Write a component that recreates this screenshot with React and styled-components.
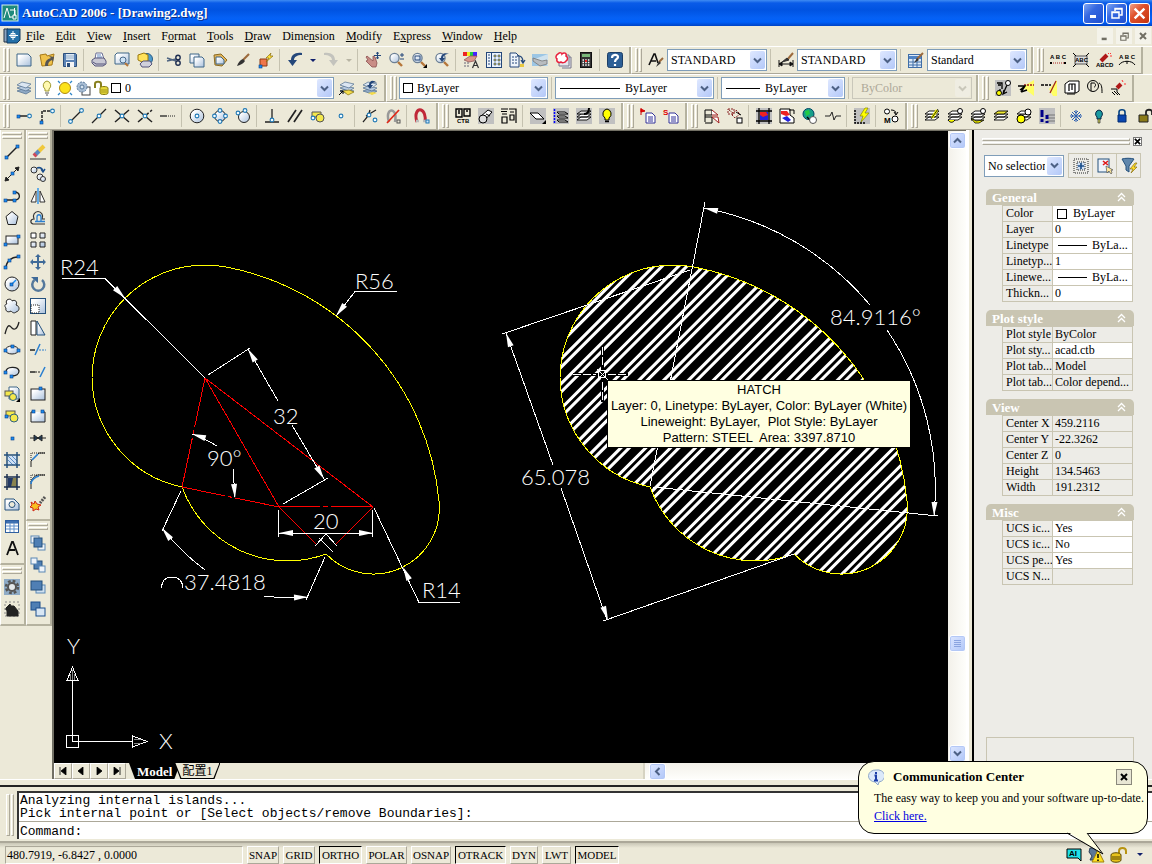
import { useState } from 'react'
import styled, { createGlobalStyle, css } from 'styled-components'

const GlobalStyle = createGlobalStyle`
  * {
    box-sizing: border-box;
  }

  body {
    margin: 0;
    background-color: #ece9d8;
    font-family: 'Liberation Serif', 'Noto Sans CJK TC', serif;
    font-size: 12px;
    line-height: 14px;
    color: #000;
  }

  button,
  select,
  input {
    font: inherit;
    color: inherit;
    padding: 0;
    margin: 0;
  }
`

/* ---------- icons ---------- */

const BLUE = '#1c4f8c'
const dot = (x, y) => (
  <rect x={x - 1} y={y - 1} width='3' height='3' fill='#1a8cf0' stroke='#0b3f86' strokeWidth='.6' />
)
const ring = (x, y) => (
  <circle cx={x} cy={y} r='1.9' fill='#f2fbff' stroke='#1f78b4' strokeWidth='1.1' />
)
const gray = <rect width='16' height='16' fill='#c0c0c0' stroke='none' />
const tinyText = (text, x, y, fill = '#000', size = 6) => (
  <text x={x} y={y} fill={fill} stroke='none' fontSize={size} fontWeight='700' fontFamily='Liberation Sans, sans-serif'>
    {text}
  </text>
)
const corner = <path d='M16 12v4h-4z' fill='#000' stroke='none' />
const lens = (
  <>
    <path d='M10 10l4 4' stroke='#b5763a' strokeWidth='2.4' />
    <circle cx='6.5' cy='6' r='4.6' fill='url(#sheen)' stroke='#6b7f95' strokeWidth='1.3' />
  </>
)
const sheets = (top) => (
  <>
    <path d='M1 11l5-2 9 2-5 3z' fill='#8fa9c4' stroke='#4f6d8e' strokeWidth='.7' />
    <path d='M1 8l5-2 9 2-5 3z' fill='#b8cbe0' stroke='#4f6d8e' strokeWidth='.7' />
    <path d='M1 5l5-3 9 2-5 4z' fill={top} stroke='#4f6d8e' strokeWidth='.7' />
  </>
)
const blackSheets = (fill) => (
  <>
    <path d='M1 12l4-3h10l-4 3zM1 9l4-3h10l-4 3z' fill='#fff' stroke='#000' strokeWidth='.9' />
    <path d='M1 6l4-3h10l-4 3z' fill={fill} stroke='#000' strokeWidth='.9' />
  </>
)
const squares = (a, b) => (
  <>
    <rect x='1' y='1' width='9' height='8' fill={a} stroke='#1c4f8c' />
    <rect x='6' y='7' width='9' height='8' fill={b} stroke='#1c4f8c' />
  </>
)

const ICONS = {
  new: <path d='M1 2h11l3 3v9H1z' fill='url(#sheen)' stroke='#3f6688' />,
  open: (
    <>
      <path d='M1 3l6-1 1 2 7-2-2 11-10 1z' fill='#f0c24a' stroke='#a87a18' />
      <path d='M6 14c0-5 2-7 6-8l-2-2 5 1-1 5-1-2c-3 1-4 3-4 6z' fill='#555' stroke='none' />
    </>
  ),
  save: (
    <>
      <path d='M1.500 1.500h12l1 1v12h-13z' fill='#5b83b5' stroke='#2c4f7c' />
      <path d='M4 2h8v6H4z' fill='#dce9f5' stroke='none' />
      <path d='M4 4h8M4 6h8' stroke='#7b98b8' strokeWidth='.7' />
      <path d='M4 10h8v5H4z' fill='#f5f5f5' stroke='none' />
      <path d='M5 11h3v4H5z' fill='#2c4f7c' stroke='none' />
    </>
  ),
  print: (
    <>
      <path d='M4 7l1-6h6l2 6z' fill='#fff' stroke='#6a6f96' />
      <path d='M6 3h4M6 5h5' stroke='#3a6ab0' strokeWidth='.8' />
      <path d='M1 8l3-2h9l2 3v3l-3 2H4l-3-3z' fill='#c8c8d4' stroke='#55557a' />
      <path d='M2 10l3 2h9' stroke='#55557a' />
    </>
  ),
  preview: (
    <>
      <path d='M3 1h12v11H1V3z' fill='url(#sheen)' stroke='#3f6688' />
      <path d='M11 11l3 3' stroke='#b5763a' strokeWidth='2' />
      <circle cx='9' cy='8' r='3' fill='#cfe4f6' stroke='#4a6a8a' />
    </>
  ),
  publish: (
    <>
      <circle cx='10' cy='7' r='5.500' fill='#4f9ccc' stroke='#2b5d86' />
      <path d='M1 3l6-2 4 2v6l-6 1-4-2z' fill='#ffe25a' stroke='#9a7810' />
      <path d='M3 12l3-3h7l2 3-3 3H5z' fill='#d0d0dc' stroke='#55557a' />
    </>
  ),
  cut: (
    <>
      <path d='M1 6l9 3M1 9l9-2' stroke='#4f6480' strokeWidth='1.500' />
      <circle cx='12' cy='5.500' r='2.200' stroke='#1d2d50' strokeWidth='1.400' />
      <circle cx='12' cy='11' r='2.200' stroke='#1d2d50' strokeWidth='1.400' />
    </>
  ),
  copy: (
    <>
      <path d='M1 2h9v9H1z' fill='url(#sheen)' stroke='#3f6688' />
      <path d='M5 5h8l2 2v8H5z' fill='url(#sheen)' stroke='#3f6688' />
    </>
  ),
  paste: (
    <>
      <path d='M2 3l7-1 6 6-5 6-7-1z' fill='#e2b458' stroke='#8c6a20' />
      <path d='M4 5h5l3 3v4H4z' fill='url(#sheen)' stroke='#3f6688' />
    </>
  ),
  brush: (
    <>
      <path d='M14 2L8 8' stroke='#9c6a3c' strokeWidth='2.200' />
      <path d='M8 7l2 2c-2 3-5 4-8 5 1-3 3-6 6-7z' fill='#333' stroke='none' />
    </>
  ),
  blockEdit: (
    <>
      <path d='M2 7h7v7H2z' fill='#f0764a' stroke='#8c3a18' />
      <path d='M13 1L8 6h3L8 10l7-6h-3z' fill='#ffe23c' stroke='#8c7010' strokeWidth='.7' />
      {dot(2, 14)}
    </>
  ),
  undo: <path d='M15 1C8 0 4 3 4 8H1l4.500 6L10 8H7c0-3 3-5 8-5z' fill='#24477a' stroke='none' />,
  redo: <path d='M1 1c7-1 11 2 11 7h3l-4.500 6L6 8h3c0-3-3-5-8-5z' fill='#c3c3bd' stroke='none' />,
  pan: (
    <>
      <path d='M2 4l6 5V4l2 1 2 6-1 4H7L1 9l2-1-2-3z' fill='#c98d86' stroke='#8b4f4f' strokeWidth='.8' />
      <path d='M12.500 0v7M9 3.500h7M11 1.500l1.500-1 1.500 1M11 5.500l1.500 1 1.500-1' stroke='#24477a' />
    </>
  ),
  zoom: (
    <>
      {lens}
      <path d='M12 3h4M14 1v4M12 7h4' stroke='#24477a' />
    </>
  ),
  zoomWin: (
    <>
      {lens}
      <rect x='4' y='4' width='5' height='4' stroke='#24477a' />
      {corner}
    </>
  ),
  zoomPrev: (
    <>
      {lens}
      <path d='M15 2C11 0 7 2 7 6H5l3 4 3-4H9c0-2 2-4 6-4z' fill='#24477a' stroke='none' />
    </>
  ),
  props: (
    <>
      <path d='M0 0h4v4H0z' fill='#e22' stroke='none' />
      <path d='M4 0h3v4H4z' fill='#ee2' stroke='none' />
      <path d='M7 0h3v4H7z' fill='#2c4' stroke='none' />
      <path d='M10 0h4v4h-4z' fill='#42f' stroke='none' />
      <path d='M1 8l6-4h7l-3 5-5 1z' fill='#d8978a' stroke='#8b4f4f' strokeWidth='.7' />
      <path d='M9.500 16l3-7 3 7M11 13.500h3' stroke='#333' strokeWidth='1.200' />
      <path d='M1 11h6M1 14h6' stroke='#667' strokeDasharray='2 1' />
    </>
  ),
  design: (
    <>
      <rect x='.500' y='.500' width='15' height='15' fill='#eef4fb' stroke='#24477a' />
      <path d='M5.500 1v14' stroke='#24477a' />
      <path d='M2 3h2M2 6h2M2 9h2M2 12h2' stroke='#24477a' />
      <path d='M8 3h2v2H8zM12 3h2v2h-2zM8 7h2v2H8zM12 7h2v2h-2zM8 11h2v2H8zM12 11h2v2h-2z' fill='#e8c840' stroke='#24477a' strokeWidth='.6' />
    </>
  ),
  toolPal: (
    <>
      <path d='M1 1h6l3 3v11H1z' fill='#eef4fb' stroke='#24477a' />
      <path d='M3 5h5M3 8h5M3 11h5' stroke='#24477a' strokeDasharray='2 1' />
      <path d='M8 4c4-1 6 2 6 6M12 8l2 3 2-3' stroke='#24477a' strokeWidth='1.300' />
      <rect x='11' y='12' width='4' height='3' fill='#e8c840' stroke='none' />
    </>
  ),
  sheetSet: (
    <>
      <path d='M0 2h16v12H0z' fill='#9cc6e4' stroke='none' />
      <path d='M0 8l16-6v12z' fill='#cfe2ee' stroke='none' />
      <path d='M1 6l9 3 5-1v4l-7 2-7-5z' fill='#b8bcc0' stroke='#777' strokeWidth='.8' />
    </>
  ),
  markup: (
    <>
      <path d='M4 3h10v11H4zM14 5h2v11H7' fill='#e6e6ee' stroke='#778' />
      <path d='M3 2c2-2 4-1 4 0 2-2 5-1 4 2 2 1 2 4 0 5-1 2-4 2-5 1-2 1-5 0-4-3-2-1-1-4 1-5z' fill='#fff' stroke='#e8203c' strokeWidth='1.500' />
    </>
  ),
  calc: (
    <>
      <rect x='2.500' y='.500' width='11' height='15' fill='#333' stroke='#111' />
      <rect x='4' y='2' width='8' height='3' fill='#7ab87a' stroke='none' />
      <path d='M4.500 8h7M4.500 10.500h7M4.500 13h7' stroke='#fff' strokeWidth='1.500' strokeDasharray='1.500 1.200' />
      <path d='M7 8h2v2H7z' fill='#e22' stroke='none' />
    </>
  ),
  help: (
    <>
      <rect x='.500' y='.500' width='15' height='15' rx='2' fill='#2c5f96' stroke='#1d3f66' />
      <path d='M5 6c0-4 6-4 6-1 0 2-3 2-3 5M8 12v2' stroke='#fff' strokeWidth='2.200' />
    </>
  ),
  textStyle: (
    <>
      <path d='M1 13L6 2h1l3 9M3 9h5' stroke='#111' strokeWidth='1.600' />
      <path d='M15 6l-4 4' stroke='#9c6a3c' strokeWidth='2' />
      <path d='M11 9l2 2-5 4z' fill='#333' stroke='none' />
    </>
  ),
  dimStyle: (
    <>
      <path d='M1 8v7M15 8v7M1 12h14M1 12l3-2v4zM15 12l-3-2v4z' fill='#111' stroke='#111' />
      <path d='M15 1L9 8' stroke='#9c6a3c' strokeWidth='2' />
      <path d='M9 6l2 2-7 2z' fill='#333' stroke='#333' />
    </>
  ),
  tableStyle: (
    <>
      <rect x='.500' y='2.500' width='13' height='13' fill='#dce9f8' stroke='#3f6ea8' />
      <path d='M1 4h12v3H1z' fill='#4f83c4' stroke='none' />
      <path d='M5 7v8M9 7v8M1 10h12M1 13h12' stroke='#3f6ea8' />
      <path d='M15 1l-6 6' stroke='#9c6a3c' strokeWidth='2' />
      <path d='M9 6l2 2-5 3z' fill='#333' stroke='none' />
    </>
  ),
  arcText: (
    <>
      {tinyText('A B C', 0, 7)}
      <path d='M1 11h14' stroke='#a22' strokeDasharray='1 1' />
      <path d='M0 10h2v2H0zM14 10h2v2h-2z' fill='#000' stroke='none' />
    </>
  ),
  textFit: (
    <>
      <rect x='2' y='4' width='12' height='8' fill='#ddd' stroke='#555' />
      <path d='M0 1l3 3M16 1l-3 3M0 15l3-3M16 15l-3-3' stroke='#000' />
      {tinyText('ABC', 2, 10, '#000', 6)}
    </>
  ),
  textMask: (
    <>
      <path d='M5 9l6-6' stroke='#b01818' strokeWidth='4' />
      <path d='M12 1l1 1M14 4h2M15 1l-1 1' stroke='#f33' />
      {tinyText('ABCD', 0, 15, '#000', 6)}
    </>
  ),
  textArc: (
    <>
      {tinyText('A B C', 0, 7)}
      <path d='M0 13c3-5 13-5 16 0M8 9v3' stroke='#000' />
    </>
  ),
  layers: sheets('#dbe6f2'),
  makeLayer: (
    <>
      {sheets('#dbe6f2')}
      <path d='M4 11l6-1 5 2-6 3z' fill='#f5dc4a' stroke='#8a7410' strokeWidth='.7' />
      <path d='M0 15l4-4M1 11h3v3' stroke='#000' />
    </>
  ),
  layerPrev: (
    <>
      {sheets('#dbe6f2')}
      <path d='M15 3c-4-4-8-2-8 2H5l3 4 3-4H9c0-2 3-3 6-2z' fill='#24477a' stroke='none' />
      <path d='M6 13l5-1 4 1-5 2z' fill='#f5dc4a' stroke='none' />
    </>
  ),
  bulbOn: (
    <>
      <path d='M8 1a4.500 4.500 0 0 1 2 8v2H6V9a4.500 4.500 0 0 1 2-8z' fill='#fff9b0' stroke='#a09a30' />
      <path d='M6 13h4M7 15h2' stroke='#555' />
    </>
  ),
  sun: (
    <>
      <circle cx='8' cy='8' r='5.500' fill='#fce21c' stroke='#b08a10' />
      <path d='M1 1l2 2M15 1l-2 2M1 15l2-2M15 15l-2-2' stroke='#2f86c8' strokeWidth='1.300' />
    </>
  ),
  freezeVp: (
    <>
      <rect x='7' y='7' width='8' height='8' fill='#fff' stroke='#444' />
      <circle cx='7' cy='7' r='5' fill='#a8bdd4' stroke='#5a7a9c' strokeDasharray='2 1' />
      <circle cx='7' cy='7' r='2' fill='#d8e4ef' stroke='#5a7a9c' />
    </>
  ),
  unlock: (
    <>
      <path d='M2 8V4c0-3 6-3 6 0v3' stroke='#888020' strokeWidth='2' />
      <path d='M7 8c0-2 8-2 8 0v5c0 2-8 2-8 0z' fill='#e6d93c' stroke='#857a10' />
      <path d='M8 10h6M8 12h6' stroke='#857a10' strokeWidth='.7' />
    </>
  ),
  trackPt: (
    <>
      <path d='M3 8h8' stroke='#222' strokeWidth='1.500' />
      {dot(2, 8)}
      {ring(13.500, 8)}
    </>
  ),
  from: (
    <>
      <path d='M3 14V3h9' stroke='#222' strokeWidth='1.500' strokeDasharray='3 1' />
      {dot(2, 14)}
      {ring(13.500, 3)}
    </>
  ),
  endpoint: (
    <>
      <path d='M3 13L13 3' stroke='#222' strokeWidth='1.300' />
      {ring(2.500, 13.500)}
      {ring(13.500, 2.500)}
    </>
  ),
  midpoint: (
    <>
      <path d='M1 15L15 1' stroke='#222' strokeWidth='1.300' />
      {ring(8, 8)}
    </>
  ),
  intersection: (
    <>
      <path d='M1 2l14 12M1 14L15 2' stroke='#222' strokeWidth='1.500' />
      {ring(8, 8)}
    </>
  ),
  appInt: (
    <>
      <path d='M1 14L15 2' stroke='#222' strokeWidth='1.500' strokeDasharray='6 2' />
      <path d='M1 2l14 12' stroke='#222' strokeWidth='1.500' />
      {ring(8, 8)}
    </>
  ),
  extension: (
    <>
      <path d='M0 8h7' stroke='#222' strokeWidth='1.300' />
      <path d='M8 8h8' stroke='#222' strokeDasharray='1 1' />
    </>
  ),
  center: (
    <>
      <circle cx='8' cy='8' r='6.800' fill='url(#sheen)' stroke='#222' />
      {ring(8, 8)}
    </>
  ),
  quadrant: (
    <>
      <circle cx='8' cy='8' r='5.500' fill='url(#sheen)' stroke='#222' />
      {ring(8, 2.500)}
      {ring(8, 13.500)}
      {ring(2.500, 8)}
      {ring(13.500, 8)}
    </>
  ),
  tangent: (
    <>
      <circle cx='9' cy='9' r='5.500' fill='url(#sheen)' stroke='#222' />
      {ring(3, 5)}
      {ring(10, 2.500)}
    </>
  ),
  perpendicular: (
    <>
      <path d='M8 1v12M1 14h14' stroke='#222' strokeWidth='1.300' />
      {ring(8, 12)}
    </>
  ),
  parallel: <path d='M1 14L9 2M7 14l8-12' stroke='#222' strokeWidth='1.700' />,
  insertPt: (
    <>
      <path d='M2 4h9v5H2z' fill='#f4e84c' stroke='#555' />
      <circle cx='10' cy='10' r='4' fill='#f4e84c' stroke='#555' />
      {ring(3, 10)}
    </>
  ),
  node: ring(8, 8),
  nearest: (
    <>
      <path d='M1 14C6 8 6 9 8 2M4 8l10-6' stroke='#222' strokeWidth='1.300' />
      {ring(13, 12)}
      {ring(7, 7)}
    </>
  ),
  snapNone: (
    <>
      <path d='M4 14c-3-9 1-13 4-11s3 6 2 11' stroke='#999' strokeWidth='2.500' />
      <path d='M2 15L14 2' stroke='#e02818' strokeWidth='1.700' />
      <rect x='12' y='12' width='3' height='3' stroke='#555' />
    </>
  ),
  snapSet: (
    <>
      <path d='M3 14C0 5 4 1 7 2s5 6 4 12' stroke='#c02838' strokeWidth='3' />
      <path d='M2 13h3M9 13h4' stroke='#bbb' strokeWidth='2.500' />
      <rect x='12' y='12' width='3' height='3' fill='#cfe6ff' stroke='#1f78b4' />
    </>
  ),
  ctb: (
    <>
      <path d='M1 1h6v8H1zM9 1h6v7H9zM3 3h2M11 3h2M3 5h2' stroke='#000' strokeWidth='1.400' />
      {tinyText('CTB', 2, 15, '#000', 6)}
    </>
  ),
  plotter: (
    <>
      {gray}
      <path d='M2 9l8-7 4 2-7 8z' fill='#fff' stroke='#000' />
      <circle cx='5' cy='11' r='4' fill='#ddd' stroke='#000' />
      <path d='M8 6l4 2' stroke='#000' />
    </>
  ),
  boxText: <path d='M0 1h7M0 3.500h6M1 6h5M1 9v6h5V9zM8 1h7v14M9 4h4M9 7h4v5H9z' stroke='#000' strokeWidth='1.200' />,
  layFlat: (
    <>
      {gray}
      <path d='M0 5h8l6 6H6z' fill='#fff' stroke='#000' />
      {corner}
    </>
  ),
  layTree: (
    <>
      {gray}
      <path d='M4 4h8l3 2H6zM4 8h8l3 2H6zM4 12h8l3 2H6z' fill='#eee' stroke='#000' />
      <path d='M1.500 1v14' stroke='#00f' strokeDasharray='2 1' strokeWidth='1.500' />
    </>
  ),
  layRestore: (
    <>
      {gray}
      {blackSheets('#ddd')}
      <path d='M8 6c5 0 5-4 5-6' stroke='#000' strokeWidth='2' />
    </>
  ),
  bulb: (
    <>
      {gray}
      <path d='M8 1a5 5 0 0 1 2 9v2H6v-2a5 5 0 0 1 2-9z' fill='#ff0' stroke='#000' />
      <path d='M6 13.500h4' stroke='#000' strokeWidth='1.500' />
    </>
  ),
  flagDoc: (
    <>
      <path d='M6 5h6l3 3v7H6z' fill='#fff' stroke='#339' />
      <path d='M8 9h5M8 11h5M8 13h5' stroke='#339' />
      <path d='M1 0v7M1 1l4 2-4 1z' fill='#f00' stroke='#c00' />
    </>
  ),
  scriptDoc: (
    <>
      <path d='M6 5h6l3 3v7H6z' fill='#fff' stroke='#339' />
      <path d='M8 9h5M8 11h5M8 13h5' stroke='#339' />
      {tinyText('S', 0, 7, '#d00', 8)}
    </>
  ),
  clipBlock: (
    <>
      <path d='M1 2v12M1 2h7v5H1M1 9h7v6H1' stroke='#000' />
      <path d='M8 2l6 5H8M8 9h6l1 6z' fill='#fff' stroke='#a02020' />
    </>
  ),
  copyNested: (
    <>
      <path d='M1 1h6v5H1zM2 2l4 3M5 7l4-5 4 4-5 4z' stroke='#822' strokeDasharray='2 1' />
      <path d='M9 4l5 3' stroke='#000' />
      <rect x='10' y='10' width='5' height='5' fill='#fff' stroke='#000' />
    </>
  ),
  imgFrame: (
    <>
      {gray}
      <path d='M4 4h8v8H4z' fill='#22d' stroke='none' />
      <path d='M4 4h6l2 3-5 2-3-2z' fill='#e22' stroke='none' />
      <path d='M3 0v16M13 0v16M0 3h16M0 13h16' stroke='#000' strokeWidth='1.300' />
    </>
  ),
  imgSwap: (
    <>
      <path d='M1 1h10v6l4 3v5H1z' fill='#fff' stroke='#000' />
      <path d='M2 3h6l3 4-4 1-5-2z' fill='#e22' stroke='none' />
      <path d='M3 10l5-2 4 4-3 2z' fill='#22d' stroke='none' />
      <path d='M10 2h5v4' stroke='#000' />
    </>
  ),
  globe: (
    <>
      <circle cx='6.500' cy='6' r='5.500' fill='#18a088' stroke='#046' />
      <path d='M3 3l4-1 1 4-4 2z' fill='#2c4' stroke='none' />
      <path d='M9 13l-4-4' stroke='#000' strokeWidth='1.500' />
      <circle cx='11' cy='12' r='3.500' fill='#fff' stroke='#555' />
    </>
  ),
  breakLine: <path d='M0 8h5l2-4 2 8 2-4h5' stroke='#222' />,
  flash: (
    <>
      {gray}
      <path d='M1 2v13h10' stroke='#000' strokeDasharray='2 1' strokeWidth='1.500' />
      <path d='M11 0L6 8h3l-2 6 8-9h-4l3-5z' fill='#ff0' stroke='#880' strokeWidth='.7' />
    </>
  ),
  moveObj: (
    <>
      <circle cx='4' cy='3.500' r='2.500' fill='#fff' stroke='#000' />
      <circle cx='12' cy='11' r='3' fill='#fff' stroke='#000' />
      <path d='M8 2c3 0 5 1 5 4M11 4l2 3 2-3' stroke='#000' />
      {tinyText('M', 1, 15, '#000', 8)}
    </>
  ),
  layPen: (
    <>
      {blackSheets('#fff')}
      <path d='M13 2L8 10' stroke='#ff0' strokeWidth='2.500' />
      <path d='M14 1L7 11' stroke='#000' strokeWidth='.8' />
    </>
  ),
  layMatch: (
    <>
      {blackSheets('#fff')}
      <circle cx='13' cy='3' r='2.500' fill='#fff' stroke='#000' />
      <path d='M1 12c2 3 5 3 7 0' stroke='#000' fill='#ff0' />
    </>
  ),
  layMatch2: (
    <>
      {blackSheets('#fff')}
      <path d='M1 10l5 3 8-1-5 3H5z' fill='#ff0' stroke='#000' strokeWidth='.8' />
      <circle cx='13' cy='3' r='2.500' fill='#fff' stroke='#000' />
    </>
  ),
  layYellow: blackSheets('#f0ea30'),
  layRing: (
    <>
      {blackSheets('#fff')}
      <circle cx='5' cy='11' r='4' fill='#ff0' stroke='#000' />
      <circle cx='12' cy='4' r='3' fill='#fff' stroke='#000' />
    </>
  ),
  layWalk: (
    <>
      {gray}
      <path d='M8 7h8M8 10h8M8 13h8' stroke='#777' />
      <path d='M3 2v7M3 11v3M8 7v4M8 13v2' stroke='#008' strokeWidth='3' />
    </>
  ),
  freeze: <path d='M8 2v12M2 8h12M4 4l8 8M12 4l-8 8M6 3l2 2 2-2M6 13l2-2 2 2M3 6l2 2-2 2M13 6l-2 2 2 2' stroke='#2c5fb0' />,
  layOff: (
    <>
      <path d='M8 2a4 4 0 0 1 2 7v2H6V9a4 4 0 0 1 2-7z' fill='#1a9aa0' stroke='#024' />
      <path d='M7 11h2v4H7z' fill='#cc5' stroke='#333' strokeWidth='.700' />
    </>
  ),
  lock: (
    <>
      <path d='M5 7V4c0-3 6-3 6 0v3' stroke='#024080' strokeWidth='1.600' />
      <path d='M4 7h8v7H4z' fill='#0a46b0' stroke='#002a70' />
    </>
  ),
  lockOpen: (
    <>
      <path d='M9 7V4c0-3 6-3 6 0v3' stroke='#222' strokeWidth='1.800' />
      <path d='M2 7h9v7H2z' fill='#8a7a18' stroke='#222' />
    </>
  ),
  exp1: (
    <>
      {gray}
      <path d='M2 3h5v6M3 5h3M5 9v6M12 5L8 14M9 10l-1 4 4-2' stroke='#000' strokeWidth='1.300' />
      <circle cx='4' cy='13' r='2.500' fill='#ff0' stroke='#000' />
      <circle cx='13' cy='3' r='2.500' fill='#fff' stroke='#000' />
    </>
  ),
  exp2: (
    <>
      <path d='M16 0v16L4 7z' fill='#ff6' stroke='none' />
      <path d='M6 5h10' stroke='#a02020' strokeWidth='1.500' strokeDasharray='2 1' />
      <path d='M0 6h7l-4 6M3 12l6-2M7 6l-5 4' stroke='#000' strokeWidth='1.500' />
    </>
  ),
  exp3: (
    <>
      <path d='M16 0v16h-4L8 9z' fill='#ff6' stroke='none' />
      <path d='M0 5h10' stroke='#000' strokeWidth='1.500' strokeDasharray='3 1' />
      <path d='M15 1L9 13' stroke='#a02020' strokeWidth='1.300' />
    </>
  ),
  exp4: (
    <>
      <path d='M5 1h10v10l-3 2H1V4z' fill='#fff' stroke='#000' />
      <path d='M5 4h6v9M5 4v7M8 4v6M3 14h8' stroke='#000' strokeWidth='1.200' />
    </>
  ),
  exp5: (
    <>
      <circle cx='6' cy='6' r='5.500' stroke='#000' />
      <path d='M4 11V3h3c2 0 2 4 0 4M12 3c3 1 3 6 3 10' stroke='#000' />
    </>
  ),
  exp6: (
    <>
      <path d='M7 8l4-4' stroke='#b01818' strokeWidth='4' />
      <path d='M12 0l1 2M14 4h2' stroke='#f33' />
      <path d='M1 9h6v3l3 3M2 12l3 3M4 11l4 4' stroke='#000' />
    </>
  ),
  /* draw toolbar */
  line: (
    <>
      <path d='M2 14L14 2' stroke='#222' strokeWidth='1.500' />
      {dot(2, 13)}
      {dot(13, 2)}
    </>
  ),
  xline: (
    <>
      <path d='M2 14L14 2M1 15l1-4 3 3zM15 1l-4 1 3 3z' fill='#222' stroke='#222' />
      {dot(8, 7)}
    </>
  ),
  pline: (
    <>
      <path d='M2 12h9M10 4c7 0 7 8 1 8' stroke='#222' strokeWidth='1.300' />
      {dot(1, 12)}
      {dot(10, 12)}
      {dot(10, 4)}
    </>
  ),
  polygon: <path d='M8 1.500l6 5-2 8H4l-2-8z' fill='url(#sheen)' stroke='#222' />,
  rectangle: (
    <>
      <rect x='2' y='4' width='12' height='8' fill='url(#sheen)' stroke='#222' />
      {dot(1, 12)}
      {dot(14, 4)}
    </>
  ),
  arc: (
    <>
      <path d='M2 14C2 8 7 3 14 3' stroke='#222' strokeWidth='1.500' />
      {dot(1, 13)}
      {dot(5, 6)}
      {dot(14, 2)}
    </>
  ),
  circle: (
    <>
      <circle cx='8' cy='8' r='7' fill='url(#sheen)' stroke='#222' />
      <path d='M8 8l4-4' stroke='#1a8cf0' strokeWidth='1.500' />
      {dot(7, 8)}
    </>
  ),
  cloud: (
    <path d='M3 2c3-2 5 0 5 1 3-2 6 1 4 4 4 1 4 6 0 7-2 2-4 0-5-1-3 2-6 0-5-3-2-2-1-4 1-4-1-1-1-3 0-4z' fill='url(#sheen)' stroke='#222' />
  ),
  spline: <path d='M1 14C4 2 6 6 8 8s5 2 7-6' stroke='#222' strokeWidth='1.300' />,
  ellipse: (
    <>
      <ellipse cx='8' cy='8' rx='6.500' ry='4' fill='url(#sheen)' stroke='#222' />
      {dot(1, 8)}
      {dot(14, 8)}
      {dot(8, 4)}
    </>
  ),
  ellipseArc: (
    <>
      <path d='M2 8c0-6 12-6 13-1 0 3-3 5-7 5' fill='url(#sheen)' stroke='#222' strokeWidth='1.300' />
      {dot(1, 8)}
      {dot(7, 12)}
    </>
  ),
  insertBlock: (
    <>
      <path d='M5 1h8l2 2v10H5z' fill='url(#sheen)' stroke='#3f6688' />
      <rect x='1' y='5' width='8' height='5' fill='#f4e84c' stroke='#555' />
      <circle cx='9' cy='11' r='3.500' fill='#f4e84c' stroke='#2f6080' />
      {corner}
    </>
  ),
  makeBlock: (
    <>
      <rect x='2' y='3' width='9' height='5' fill='#f4e84c' stroke='#555' />
      <circle cx='10' cy='10' r='4' fill='#f4e84c' stroke='#2f6080' />
      {dot(2, 8)}
    </>
  ),
  point: dot(8, 8),
  hatch: (
    <>
      <path d='M4 4h9v9H4z' fill='#cfe0f4' stroke='none' />
      <path d='M4 4l9 9M8 4l5 5M4 8l5 5' stroke='#3a76b8' strokeWidth='.8' />
      <path d='M3 0v16M13 0v16M0 3h16M0 13h16' stroke='#24507c' strokeWidth='1.500' />
    </>
  ),
  gradient: (
    <>
      <path d='M4 4h9v9H4z' fill='#8a8450' stroke='none' />
      <path d='M4 4h5l-2 9H4z' fill='#243a66' stroke='none' />
      <path d='M3 0v16M13 0v16M0 3h16M0 13h16' stroke='#1c3050' strokeWidth='1.500' />
    </>
  ),
  region: (
    <>
      <path d='M1 3h9l5 5v6H1z' fill='url(#sheen)' stroke='#24507c' />
      <circle cx='8' cy='8.500' r='3' fill='#ece9d8' stroke='#24507c' />
    </>
  ),
  table: (
    <>
      <rect x='1.500' y='2.500' width='13' height='12' fill='#fff' stroke='#2f5fa0' />
      <path d='M2 3h12v2H2z' fill='#4f83c4' stroke='#2f5fa0' />
      <path d='M6 5v9M10 5v9M2 8h12M2 11h12' stroke='#5f8fca' />
    </>
  ),
  mtext: <path d='M3 15L8 2h1l5 13M5 10h6' stroke='#111' strokeWidth='1.800' />,
  gear: (
    <>
      <rect width='16' height='16' fill='#8fabc6' stroke='none' />
      <circle cx='8' cy='8' r='6' stroke='#555' strokeWidth='2.500' strokeDasharray='2.700 2' />
      <circle cx='8' cy='8' r='4' fill='#e4e8ea' stroke='#555' strokeWidth='2' />
    </>
  ),
  house: (
    <>
      <path d='M1 1h14v14H1z' stroke='#888' strokeDasharray='2 2' />
      <path d='M2 7l4-4 1 2h3l4 5v5H3V9H2z' fill='#222' stroke='#222' />
    </>
  ),
  /* modify toolbar */
  erase: (
    <>
      <path d='M14 2L8 8' stroke='#f0c83c' strokeWidth='4' />
      <path d='M9 7l-4 4' stroke='#5a88c0' strokeWidth='4' />
      <path d='M6 10l-2 2' stroke='#d04858' strokeWidth='4' />
      <path d='M0 15h16' stroke='#333' />
    </>
  ),
  copyObj: (
    <>
      <circle cx='4' cy='4' r='3' fill='url(#sheen)' stroke='#333' />
      <circle cx='10' cy='11' r='3' fill='url(#sheen)' stroke='#333' />
      <circle cx='13' cy='13' r='2.500' fill='url(#sheen)' stroke='#333' />
      <path d='M7 2c3-1 5 0 6 3M11 3l2 3 2-3' stroke={BLUE} strokeWidth='1.500' />
    </>
  ),
  mirror: (
    <>
      <path d='M6 3v11H1zM10 3v11h5z' fill='#fff' stroke='#333' />
      <path d='M8 0v16' stroke='#1a8cf0' strokeWidth='1.300' />
    </>
  ),
  offset: (
    <>
      <path d='M15 14H3c-3-1-3-5 1-5C2 5 5 1.500 8 1.500S14 5 12 9h3' stroke='#333' strokeWidth='1.200' />
      <path d='M15 11.500H5h2V7c0-3 4-3 4 0v4' stroke='#2a7fd0' strokeWidth='1.300' />
    </>
  ),
  array: (
    <path d='M1 1h5v5H1zM10 1h5v5h-5zM1 10h5v5H1zM10 10h5v5h-5z' fill='url(#sheen)' stroke='#222' />
  ),
  move: <path d='M8 0l3 3H9v4h4V5l3 3-3 3V9H9v4h2l-3 3-3-3h2V9H3v2L0 8l3-3v2h4V3H5z' fill='#3f6a98' stroke='none' />,
  rotate: (
    <>
      <path d='M4.500 4a6 6 0 1 0 7.500 0' stroke='#55799c' strokeWidth='2.500' />
      <path d='M1 1h7v6z' fill='#3f6a98' stroke='none' />
    </>
  ),
  scale: (
    <>
      <rect x='.500' y='.500' width='15' height='15' fill='url(#sheen)' stroke='#24507c' />
      <rect x='1' y='7' width='8' height='8' fill='#fff' stroke='#222' strokeDasharray='1 1' />
    </>
  ),
  stretch: (
    <>
      <path d='M1 1h5v14H1z' stroke='#222' fill='#fff' />
      <path d='M7 1l8 14H7z' fill='url(#sheen)' stroke='#24507c' />
    </>
  ),
  trim: (
    <>
      <path d='M0 8h5' stroke='#222' strokeWidth='1.500' />
      <path d='M5 13L10 2' stroke='#2a7fd0' strokeWidth='1.500' />
      <path d='M9 8h7' stroke='#2a7fd0' strokeDasharray='2 1' />
    </>
  ),
  extend: (
    <>
      <path d='M0 8h5' stroke='#222' strokeWidth='1.500' />
      <path d='M5 8h6' stroke='#222' strokeDasharray='2 1' />
      <path d='M10 13L15 3' stroke='#2a7fd0' strokeWidth='1.500' />
    </>
  ),
  breakAt: (
    <>
      <rect x='1' y='3' width='14' height='11' fill='url(#sheen)' stroke='#222' />
      {dot(10, 2)}
    </>
  ),
  breakObj: (
    <>
      <path d='M4 4H1v10h14V4h-3' fill='url(#sheen)' stroke='#222' />
      {dot(3, 3)}
      {dot(12, 3)}
    </>
  ),
  join: <path d='M0 8h16M4 5l4 3-4 3zM12 5L8 8l4 3z' fill='#24507c' stroke='#222' />,
  chamfer: (
    <>
      <path d='M1 8V1h14' stroke='#222' strokeDasharray='1 1' />
      <path d='M1 15V9l8-8h6' stroke='#222' />
      <path d='M2 8l6-6' stroke='#2a7fd0' strokeWidth='1.700' />
    </>
  ),
  fillet: (
    <>
      <path d='M1 8V1h14' stroke='#222' strokeDasharray='1 1' />
      <path d='M1 15V9c0-4 4-8 8-8h6' stroke='#222' />
      <path d='M1 10c0-4 4-7 8-8' stroke='#2a7fd0' strokeWidth='1.700' />
    </>
  ),
  explode: (
    <>
      <path d='M15 1l-5 6' stroke='#555' strokeWidth='3' strokeDasharray='2 1' />
      <path d='M1 6l3 2 1-3 2 3 4 1-3 2 1 3-3-1-3 2v-3l-3-1 2-2z' fill='#f8c020' stroke='#d02818' />
    </>
  ),
  orderFront: (
    <>
      <rect x='1' y='1' width='8' height='7' fill='#eef3f9' stroke='#5a88b4' />
      <rect x='8' y='9' width='7' height='6' fill='#eef3f9' stroke='#5a88b4' />
      <rect x='4' y='3' width='8' height='9' fill='#4f7fb4' stroke='#24507c' />
    </>
  ),
  orderBack: (
    <>
      <rect x='4' y='4' width='8' height='8' fill='#4f7fb4' stroke='#24507c' />
      <rect x='1' y='1' width='6' height='6' fill='#eef3f9' stroke='#5a88b4' />
      <rect x='9' y='9' width='6' height='6' fill='#eef3f9' stroke='#5a88b4' />
    </>
  ),
  orderAbove: (
    <>
      <rect x='6' y='6' width='9' height='8' fill='#cfe0f0' stroke='#5a88b4' />
      <rect x='1' y='2' width='11' height='9' fill='#4f7fb4' stroke='#24507c' />
    </>
  ),
  orderUnder: squares('#4f7fb4', '#d8e6f4'),
  quickSelect: (
    <>
      <path d='M1 1c3-1 9-1 12 0L8 8v6l-3-2V8z' fill='#5f86ac' stroke='#24507c' />
      <path d='M14 5l-5 6h3l-2 4 6-6h-3l3-4z' fill='#ffdc28' stroke='#8a7010' strokeWidth='.7' />
    </>
  ),
  pickAdd: (
    <>
      <path d='M1 1h14v14H1z' stroke='#222' strokeDasharray='1 1' />
      <path d='M4 4h8v8H4z' fill='#d0e0f4' stroke='#222' strokeDasharray='1 1' />
      <path d='M8 5v6M5 8h6' stroke={BLUE} strokeWidth='1.700' />
    </>
  ),
  selectObj: (
    <>
      <rect x='1' y='1' width='11' height='13' fill='#eef4fb' stroke='#24507c' />
      <path d='M6 3l5 4M11 3L6 7' stroke='#e01818' strokeWidth='1.600' />
      <path d='M9 8l1 7 2-2 2 3 1-1-1-3h2z' fill='#ffe9a0' stroke='#555' strokeWidth='.7' />
    </>
  ),
}

const IconSvg = styled.svg`
  display: block;
  width: 16px;
  height: 16px;
  flex: none;
  overflow: visible;
`

const Icon = ({ name }) => (
  <IconSvg viewBox='0 0 16 16' fill='none' stroke='#222' aria-hidden='true'>
    {ICONS[name]}
  </IconSvg>
)

/* ---------- frame ---------- */

const Window = styled.div`
  position: relative;
  display: flex;
  flex-direction: column;
  min-height: 100vh;
  overflow: hidden;
`

const TitleBar = styled.header`
  display: flex;
  align-items: center;
  height: 26px;
  padding: 0 2px;
  background: linear-gradient(#3f8cf3 0, #0a5be8 3px, #0053e1 10px, #0561f5 18px, #0060fa 22px, #0043c4 26px);
  color: #fff;
`

const Title = styled.h1`
  flex: 1;
  margin: 0 0 0 4px;
  font-size: 13px;
  line-height: 20px;
  font-weight: 700;
  text-shadow: 1px 1px 0 #0a2f8a;
`

const CaptionButton = styled.button`
  display: flex;
  width: 21px;
  height: 21px;
  margin-left: 2px;
  border: 1px solid #fff;
  border-radius: 3px;
  align-items: center;
  justify-content: center;
  background: ${(props) =>
    props.$close
      ? 'linear-gradient(135deg, #f0a088, #e0522c 40%, #c43410)'
      : 'linear-gradient(135deg, #7fa6f4, #3568e0 40%, #1f4fd0)'};
`

const MenuBar = styled.nav`
  display: flex;
  align-items: center;
  gap: 1px;
  height: 20px;
  padding: 0 1px 0 4px;
`

const MenuItem = styled.button`
  border: 0;
  padding: 0 5px;
  background: none;
  line-height: 16px;
`

const MdiButtons = styled.div`
  display: flex;
  gap: 3px;
  margin-left: auto;
`

const MdiButton = styled.button`
  display: flex;
  align-items: center;
  justify-content: center;
  width: 16px;
  height: 16px;
  border: 0;
  background-color: #f4f3ea;
`

/* ---------- toolbars ---------- */

const ToolRow = styled.div`
  display: flex;
  height: 28px;
  border-top: 1px solid #fff;
  overflow: hidden;
`

const Bar = styled.div`
  display: flex;
  align-items: center;
  flex: none;
  padding: 0 3px;
  border-left: 1px solid #fff;
  border-right: 2px solid #b5b29f;
  border-bottom: 1px solid #aca899;

  &:first-child {
    border-left: 0;
  }
`

const gripLine = css`
  content: '';
  border: 1px solid;
  border-color: #fff #aca899 #aca899 #fff;
`

const Grip = styled.span`
  display: flex;
  flex: none;
  gap: 1px;
  width: 7px;
  height: 24px;
  margin-right: 2px;

  &::before,
  &::after {
    ${gripLine}
    flex: 1;
  }
`

const ToolButton = styled.button`
  display: flex;
  align-items: center;
  justify-content: center;
  flex: none;
  width: 23px;
  height: 22px;
  border: 0;
  background: none;
`

const DropButton = styled(ToolButton)`
  width: 13px;

  &::after {
    content: '';
    border: 3px solid transparent;
    border-top-color: ${(props) => (props.disabled ? '#b8b5a4' : '#10206c')};
    border-bottom: 0;
  }
`

const Divider = styled.span`
  flex: none;
  width: 6px;
  height: 22px;
  background: linear-gradient(#c5c2b0, #c5c2b0) 2px 0 / 1px 100% no-repeat;
`

const Combo = styled.div`
  display: flex;
  align-items: center;
  flex: none;
  width: ${(props) => props.$width}px;
  height: 22px;
  margin-right: 1px;
  padding: 1px 1px 1px 3px;
  border: 1px solid ${(props) => (props.$disabled ? '#c9c7ba' : '#7f9db9')};
  background-color: ${(props) => (props.$disabled ? '#ece9d8' : '#fff')};
  color: ${(props) => (props.$disabled ? '#aca899' : '#000')};
  gap: 2px;
`

const ComboSelect = styled.select`
  appearance: none;
  flex: 1;
  min-width: 0;
  height: 18px;
  padding-left: ${(props) => props.$indent || 0}px;
  border: 0;
  background: none;
  opacity: 1;
`

const Arrow = styled.span`
  display: flex;
  align-items: center;
  justify-content: center;
  flex: none;
  width: 15px;
  height: 18px;
  border-radius: 2px;
  background: ${(props) => (props.$disabled ? '#efede2' : 'linear-gradient(135deg, #dfe8ff, #b3c8f8)')};
`

const LineSample = styled.hr`
  flex: none;
  width: ${(props) => props.$width}px;
  margin: 0 2px 0 1px;
  border: 0;
  border-top: 1px solid #000;
`

const Swatch = styled.span`
  flex: none;
  display: inline-block;
  width: 10px;
  height: 10px;
  border: 1px solid #000;
  background-color: #fff;
`

const Chevron = ({ dir = 'down', color = '#4d6185', size = 9 }) => {
  const turn = { down: 0, up: 180, left: 90 }[dir]
  return (
    <svg width={size} height={size} viewBox='0 0 9 9' aria-hidden='true'>
      <path d='M1 2.500l3.500 3.500L8 2.500' fill='none' stroke={color} strokeWidth='2' transform={`rotate(${turn} 4.500 4.500)`} />
    </svg>
  )
}

const ComboBox = ({ label, value, width, disabled, indent, children }) => (
  <Combo $width={width} $disabled={disabled}>
    {children}
    <ComboSelect aria-label={label} disabled={disabled} $indent={indent}>
      <option>{value}</option>
    </ComboSelect>
    <Arrow $disabled={disabled}>
      <Chevron color={disabled ? '#c9c7ba' : undefined} />
    </Arrow>
  </Combo>
)

const Tools = ({ names }) =>
  names.split(' ').map((name, index) =>
    name === '|' ? (
      <Divider key={index} />
    ) : (
      <ToolButton key={index} aria-label={name}>
        <Icon name={name} />
      </ToolButton>
    )
  )

/* ---------- work area ---------- */

const WorkArea = styled.div`
  display: flex;
  flex: 1;
  min-height: 0;
  border-bottom: 1px solid #fff;
`

const SideColumn = styled.div`
  display: flex;
  flex-direction: column;
  flex: none;
  width: 26px;
`

const SideBar = styled.div`
  display: flex;
  flex-direction: column;
  align-items: center;
  padding: 2px 1px 4px 0;
  border-left: 1px solid #fff;
  border-right: 2px solid #b5b29f;
  border-bottom: 2px solid #b5b29f;
`

const SideGrip = styled.span`
  display: flex;
  flex-direction: column;
  gap: 1px;
  width: 20px;
  height: 7px;
  margin-bottom: 2px;

  &::before,
  &::after {
    ${gripLine}
    flex: 1;
  }
`

const SideButton = styled(ToolButton)`
  height: 22px;
`

const DrawingPane = styled.main`
  display: flex;
  flex-direction: column;
  flex: 1;
  min-width: 0;
  border-left: 2px solid #716f64;
`

const CanvasRow = styled.div`
  display: flex;
  flex: 1;
  min-height: 0;
  border-top: 1px solid #716f64;
`

const Canvas = styled.div`
  position: relative;
  flex: 1;
  min-width: 0;
  background-color: #000;
  overflow: hidden;
`

const Drawing = styled.svg`
  display: block;
  width: 100%;
  height: 100%;

  text {
    font-family: Lato, sans-serif;
    font-weight: 300;
    font-size: 22px;
    fill: #fff;
    stroke: none;
  }
`

const HoverTip = styled.div`
  position: absolute;
  left: 553px;
  top: 249px;
  width: 304px;
  padding: 1px 0;
  border: 1px solid #000;
  background-color: #ffffe1;
  font-family: 'Liberation Sans', sans-serif;
  font-size: 13px;
  line-height: 16px;
  text-align: center;
  white-space: pre;
`

const VScroll = styled.div`
  display: flex;
  flex-direction: column;
  justify-content: space-between;
  align-items: center;
  flex: none;
  width: 18px;
  padding: 1px 0;
  background: linear-gradient(90deg, #f3f1ea, #fefefb);
`

const ScrollButton = styled.button`
  display: flex;
  align-items: center;
  justify-content: center;
  flex: none;
  width: 17px;
  height: 17px;
  border: 1px solid #fff;
  border-radius: 3px;
  background: linear-gradient(135deg, #dce6ff, #b0c6f8);
  box-shadow: inset 0 0 0 1px #b4c8f6;
`

const ScrollSpace = styled.span`
  flex: ${(props) => props.$grow};
`

const TabRow = styled.div`
  display: flex;
  align-items: stretch;
  height: 16px;
`

const TabNav = styled.button`
  display: flex;
  align-items: center;
  justify-content: center;
  width: 18px;
  border: 1px solid;
  border-color: #fff #aca899 #aca899 #fff;
  background: none;
`

const TabStrip = styled.div`
  display: flex;
  flex: 1;
  padding-left: 3px;
`

const SheetTab = styled.button`
  position: relative;
  height: 16px;
  padding: 0 8px;
  margin-right: -6px;
  border: 0;
  clip-path: polygon(0 0, 100% 0, calc(100% - 6px) 100%, 6px 100%);
  background-color: #000;
  color: ${(props) => (props.$active ? '#fff' : '#000')};
  font-size: ${(props) => (props.$active ? 13 : 12)}px;
  font-weight: ${(props) => (props.$active ? 700 : 400)};
  line-height: 15px;

  ${(props) =>
    !props.$active &&
    css`
      z-index: 0;

      &::before {
        content: '';
        position: absolute;
        z-index: -1;
        inset: 0 1px 1px;
        background-color: #ece9d8;
        clip-path: polygon(0 0, 100% 0, calc(100% - 6px) 100%, 6px 100%);
      }
    `}
`

const HScroll = styled.div`
  display: flex;
  width: 323px;
  padding-left: 4px;
  background: linear-gradient(#f3f1ea, #fefefb);
  border-left: 2px solid #d6d3c2;
`

const Gutter = styled.div`
  flex: none;
  width: 8px;
  border-left: 3px solid #fff;
  border-right: 2px solid #000;
`

/* ---------- properties palette ---------- */

const Palette = styled.aside`
  display: flex;
  flex-direction: column;
  flex: none;
  width: 178px;
  padding: 7px 18px 0 12px;
  background-color: #edece7;
`

const PaletteTop = styled.div`
  display: flex;
  align-items: center;
  width: 160px;
  height: 8px;
  margin: 0 0 8px -4px;
`

const PaletteGrip = styled.span`
  display: flex;
  flex-direction: column;
  gap: 1px;
  flex: 1;
  height: 7px;
  margin-right: 3px;

  &::before,
  &::after {
    ${gripLine}
    flex: 1;
  }
`

const PaletteClose = styled.button`
  display: flex;
  align-items: center;
  justify-content: center;
  flex: none;
  width: 9px;
  height: 9px;
  border: 1px solid #777;
  background-color: #fff;
`

const PickRow = styled.div`
  display: flex;
  align-items: center;
  width: 158px;
  margin: 0 0 11px -2px;
`

const PickButton = styled.button`
  display: flex;
  align-items: center;
  justify-content: center;
  flex: none;
  width: 25px;
  height: 25px;
  margin-right: -1px;
  border: 1px solid #c9c5b2;
  background: none;

  &:first-of-type {
    margin-left: 3px;
  }
`

const GroupHead = styled.button`
  display: flex;
  align-items: center;
  justify-content: space-between;
  width: 100%;
  height: 16px;
  padding: 0 8px 0 6px;
  border: 0;
  border-radius: 5px 5px 0 0;
  background-color: #c9c5b2;
  color: #fff;
  font-size: 13px;
  font-weight: 700;
  line-height: 15px;
`

const PropTable = styled.table`
  width: 131px;
  margin: 0 0 8px 16px;
  border-collapse: collapse;
  table-layout: fixed;
`

const PropName = styled.th`
  width: 50px;
  height: 16px;
  padding: 0 0 0 3px;
  border: 1px solid #c9c5b2;
  font-weight: 400;
  line-height: 15px;
  text-align: left;
  white-space: nowrap;
  overflow: hidden;
`

const PropValue = styled.td`
  height: 16px;
  padding: 0 0 0 2px;
  border: 1px solid #c9c5b2;
  background-color: ${(props) => (props.$fixed ? 'transparent' : '#fff')};
  line-height: 15px;
  white-space: nowrap;
  overflow: hidden;
`

const ValueLine = styled.div`
  display: flex;
  align-items: center;
  gap: ${(props) => props.$gap || 0}px;
  padding-left: 2px;
`

const Blurb = styled.div`
  height: 42px;
  margin-top: auto;
  border: 1px solid #c9c5b2;
`

/* ---------- command line and status ---------- */

const CommandDock = styled.section`
  display: flex;
  height: 58px;
  margin-top: 5px;
  padding: 4px 0 2px 6px;
  border-top: 2px solid #222;
  border-bottom: 2px solid #aca899;
`

const CommandGrip = styled(Grip)`
  width: 8px;
  height: 42px;
  margin: 3px 3px 0 0;
`

const CommandWindow = styled.div`
  flex: 1;
  border: 2px solid #333;
  border-right: 0;
  border-bottom: 0;
  background-color: #fff;
  font-family: 'Liberation Mono', monospace;
  font-size: 13px;
  line-height: 13px;
`

const History = styled.pre`
  height: 29px;
  margin: 0;
  padding: 1px;
  border-bottom: 1px solid #aca899;
  font: inherit;
`

const Prompt = styled.label`
  display: flex;
  padding: 3px 1px 0;
`

const PromptInput = styled.input`
  flex: 1;
  height: 14px;
  border: 0;
  outline: none;
  background: none;
`

const StatusBar = styled.footer`
  display: flex;
  align-items: center;
  height: 21px;
  padding: 2px 6px 0 5px;
  gap: 4px;
  background: linear-gradient(#c9c6b6, #ece9d8 5px);
`

const Coords = styled.output`
  flex: none;
  width: 238px;
  height: 18px;
  padding-left: 1px;
  border: 1px solid;
  border-color: #aca899 #fff #fff #aca899;
  line-height: 17px;
`

const ModeButton = styled.button`
  flex: none;
  width: ${(props) => props.$width}px;
  height: 18px;
  border: 1px solid;
  border-color: ${(props) => (props.$on ? '#000 #fff #fff #000' : '#fff #aca899 #aca899 #fff')};
  background: none;
  font-size: 11px;
  line-height: 16px;
  white-space: nowrap;
`

const Tray = styled.div`
  display: flex;
  align-items: center;
  margin-left: auto;
  gap: 5px;
`

/* ---------- balloon ---------- */

const Balloon = styled.section`
  position: absolute;
  right: 4px;
  bottom: 30px;
  width: 290px;
  height: 73px;
  padding: 7px 11px 0 15px;
  border: 1px solid #000;
  border-radius: 16px;
  background-color: #ffffe1;
`

const BalloonHead = styled.div`
  display: flex;
  align-items: center;
  height: 16px;
  margin-left: -6px;
`

const BalloonTitle = styled.h2`
  flex: 1;
  margin: 0 0 2px 9px;
  font-size: 13px;
  line-height: 15px;
`

const BalloonClose = styled.button`
  display: flex;
  align-items: center;
  justify-content: center;
  width: 16px;
  height: 16px;
  margin-right: 4px;
  border: 1px solid #8a887c;
  background-color: #e8e6d4;
`

const BalloonText = styled.p`
  margin: 6px 0 4px;
  white-space: nowrap;
`

const BalloonLink = styled.a`
  color: #0000e0;
  text-decoration: underline;
`

const Tail = styled.svg`
  position: absolute;
  right: 40px;
  top: 70px;
`

/* ---------- drawing ---------- */

const OUTLINE =
  'M226 267A263 263 0 0 1 439 501A66 66 0 0 1 326 554A112 112 0 0 1 182 487A113 113 0 0 1 92 378A113 113 0 0 1 205 265A113 113 0 0 1 226 267Z'

const hatchStarts = Array.from({ length: 32 }, (_, i) => 796 + i * 24.800)

const ArrowHead = ({ x, y, angle }) => (
  <path d='M0 0L-14 -3V3z' fill='#fff' stroke='none' transform={`translate(${x} ${y}) rotate(${angle})`} />
)

const Outline = ({ x = 0 }) => (
  <path d={OUTLINE} transform={`translate(${x} 0)`} stroke='#ff0' shapeRendering='crispEdges' />
)

const Plan = () => (
  <Drawing fill='none' stroke='#fff' strokeWidth='1'>
    <defs>
      <clipPath id='plate'>
        <path d={OUTLINE} transform='translate(468 0)' />
      </clipPath>
    </defs>
    <g transform='translate(-54 -131)'>
      <g clipPath='url(#plate)' strokeWidth='3.100'>
        {hatchStarts.map((k) => (
          <path key={k} d={`M${k - 240} 240L${k - 590} 590M${k - 231.700} 240L${k - 581.700} 590`} />
        ))}
      </g>
      <Outline />
      <Outline x={468} />

      <g stroke='#f00' shapeRendering='crispEdges'>
        <path d='M205 378L182 487' strokeDasharray='50 3 5 3' />
        <path d='M205 378L279 507' />
        <path d='M205 378L373 507' />
        <path d='M182 487L279 507' strokeDasharray='44 3 4 3' />
        <path d='M279 506.500H373' strokeDasharray='41 3 5 3' />
        <path d='M279 507L317 545M373 507L335 545' />
      </g>

      <g shapeRendering='crispEdges'>
        <path d='M62 278.500H105L205 378' />
        <path d='M397 291.500H355L336 316' />
        <path d='M208 375L250 348M283 504L328 478M248 349L278 401M292 425L324 479' />
        <path d='M192 434Q204 438 217 446M233 469L235 497' />
        <path d='M315 546L326 534L337 546M319 538L333 552' />
        <path d='M278.500 510V537M372.500 510V537M279 533.500H373' />
        <path d='M181 491L162 531M163 529Q182 553 205 570M264 596Q286 599 307 597M325 557L306 600' />
        <path d='M374 508L419 602.500H460' />
        <path d='M161.500 588Q162 577 172 577T183 588' />

        <path d='M650 486L705 202M653 487L938 516' />
        <path d='M704 208A284 284 0 0 1 870 305M887 330A284 284 0 0 1 934 516' />
        <path d='M502 334L690 270M506 333L553 465M561 488L607 620M603 621L794 554' />
      </g>
      <ArrowHead x={125} y={298} angle={45} />
      <ArrowHead x={336} y={316} angle={128} />
      <ArrowHead x={248} y={349} angle={-121} />
      <ArrowHead x={324} y={479} angle={59} />
      <ArrowHead x={192} y={434} angle={-163} />
      <ArrowHead x={235} y={498} angle={86} />
      <ArrowHead x={279} y={533} angle={180} />
      <ArrowHead x={373} y={533} angle={0} />
      <ArrowHead x={162} y={528} angle={-128} />
      <ArrowHead x={308} y={597} angle={-2} />
      <ArrowHead x={403} y={567} angle={-116} />
      <ArrowHead x={704} y={208} angle={-168} />
      <ArrowHead x={934} y={516} angle={92} />
      <ArrowHead x={506} y={333} angle={-110} />
      <ArrowHead x={608} y={620} angle={70} />

      <g shapeRendering='crispEdges'>
        <path d='M573 374.500H628M602.500 347V402' stroke='#000' strokeWidth='3' />
        <path d='M573 374.500H596M608 374.500H628M602.500 347V366M602.500 382V402' strokeDasharray='8 2' />
        <rect x='598.500' y='370.500' width='7' height='7' />
        <path d='M597 369l11 11M608 369l-11 11' />
      </g>

      <text x='60' y='275'>R24</text>
      <text x='355' y='289'>R56</text>
      <text x='273' y='424'>32</text>
      <text x='207' y='466'>90°</text>
      <text x='313' y='529'>20</text>
      <text x='184' y='590'>37.4818</text>
      <text x='422' y='598'>R14</text>
      <text x='830' y='325'>84.9116°</text>
      <text x='521' y='485'>65.078</text>
      <text x='67' y='654'>Y</text>
      <text x='159' y='749'>X</text>

      <g shapeRendering='crispEdges'>
        <rect x='66.500' y='735.500' width='12' height='12' />
        <path d='M72.500 741V681M72 741.500H133' />
        <path d='M72.500 667L67 680.500H78z' />
        <path d='M72.500 670V680M70.500 674V680M74.500 674V680' stroke='#888' />
        <path d='M147 741.500L132.500 736V747z' />
        <path d='M134 739.500H141M134 743.500H141' stroke='#888' />
      </g>
    </g>
  </Drawing>
)

/* ---------- data ---------- */

const MENUS = [
  ['', 'F', 'ile'],
  ['', 'E', 'dit'],
  ['', 'V', 'iew'],
  ['', 'I', 'nsert'],
  ['F', 'o', 'rmat'],
  ['', 'T', 'ools'],
  ['', 'D', 'raw'],
  ['Dime', 'n', 'sion'],
  ['', 'M', 'odify'],
  ['E', 'x', 'press'],
  ['', 'W', 'indow'],
  ['', 'H', 'elp'],
]

const GROUPS = [
  {
    title: 'General',
    rows: [
      ['Color', 'ByLayer', 'swatch'],
      ['Layer', '0'],
      ['Linetype', 'ByLa...', 'line'],
      ['Linetyp...', '1'],
      ['Linewe...', 'ByLa...', 'line'],
      ['Thickn...', '0'],
    ],
  },
  {
    title: 'Plot style',
    rows: [
      ['Plot style', 'ByColor', 'fixed'],
      ['Plot sty...', 'acad.ctb'],
      ['Plot tab...', 'Model', 'fixed'],
      ['Plot tab...', 'Color depend...', 'fixed'],
    ],
  },
  {
    title: 'View',
    rows: [
      ['Center X', '459.2116', 'fixed'],
      ['Center Y', '-22.3262', 'fixed'],
      ['Center Z', '0', 'fixed'],
      ['Height', '134.5463', 'fixed'],
      ['Width', '191.2312', 'fixed'],
    ],
  },
  {
    title: 'Misc',
    rows: [
      ['UCS ic...', 'Yes'],
      ['UCS ic...', 'No'],
      ['UCS pe...', 'Yes'],
      ['UCS N...', '', 'fixed'],
    ],
  },
]

const MODES = [
  ['SNAP', 32],
  ['GRID', 32],
  ['ORTHO', 43],
  ['POLAR', 41],
  ['OSNAP', 40],
  ['OTRACK', 51],
  ['DYN', 28],
  ['LWT', 29],
  ['MODEL', 44],
]

const DRAW =
  'line xline pline polygon rectangle arc circle cloud spline ellipse ellipseArc insertBlock makeBlock point hatch gradient region table mtext'
const MODIFY =
  'erase copyObj mirror offset array move rotate scale stretch trim extend breakAt breakObj join chamfer fillet explode'

const SideTools = ({ names }) => (
  <SideBar>
    <SideGrip />
    {names.split(' ').map((name) => (
      <SideButton key={name} aria-label={name}>
        <Icon name={name} />
      </SideButton>
    ))}
  </SideBar>
)

const Cross = ({ size = 8, color = '#000', width = 2 }) => (
  <svg width={size} height={size} viewBox='0 0 8 8' aria-hidden='true'>
    <path d='M1 1l6 6M7 1L1 7' stroke={color} strokeWidth={width} />
  </svg>
)

const Restore = ({ size, color }) => (
  <svg width={size} height={size} viewBox='0 0 12 12' fill='none' stroke={color} aria-hidden='true'>
    <path d='M4 4V1.500h7V8H8.500M4 2h7' strokeWidth='1.500' />
    <path d='M1 5h7v6H1zM1 5.500h7' strokeWidth='1.500' />
  </svg>
)

const Minus = ({ color, size = 12 }) => (
  <svg width={size} height={size} viewBox='0 0 12 12' aria-hidden='true'>
    <path d='M2 9.500h6' stroke={color} strokeWidth='3' />
  </svg>
)

const App = () => {
  const [modes, setModes] = useState({ ORTHO: true, OTRACK: true, MODEL: true })
  const [balloonOpen, setBalloonOpen] = useState(true)

  const toggleMode = (name) => {
    setModes((prev) => ({ ...prev, [name]: !prev[name] }))
  }

  return (
    <Window>
      <GlobalStyle />
      <svg width='0' height='0' style={{ position: 'absolute' }} aria-hidden='true'>
        <linearGradient id='sheen' x1='0' y1='0' x2='1' y2='1'>
          <stop offset='0.200' stopColor='#fff' />
          <stop offset='1' stopColor='#a9c0dc' />
        </linearGradient>
      </svg>

      <TitleBar>
        <IconSvg viewBox='0 0 16 16' fill='none' stroke='#fff' aria-hidden='true'>
          <rect width='16' height='16' fill='#1f8a7c' stroke='#d8f0ea' />
          <path d='M2 13L5 3l3 10M8 5h5v6M11 10h3v4h-3zM8 12h3M12.500 3v7' />
        </IconSvg>
        <Title>AutoCAD 2006 - [Drawing2.dwg]</Title>
        <CaptionButton aria-label='Minimize'>
          <Minus color='#fff' />
        </CaptionButton>
        <CaptionButton aria-label='Restore'>
          <Restore size={12} color='#fff' />
        </CaptionButton>
        <CaptionButton $close aria-label='Close'>
          <Cross size={13} color='#fff' width={1.500} />
        </CaptionButton>
      </TitleBar>

      <MenuBar>
        <IconSvg viewBox='0 0 16 16' fill='none' stroke='#fff' aria-hidden='true'>
          <path d='M0 1h4v13H0z' fill='#8aa4c0' stroke='#234' />
          <path d='M3 1h13v11l-3 3H3z' fill='#2470a8' stroke='#123a60' />
          <path d='M9 3v9M5 7.500h9M7 5.500h4v4H7z' />
        </IconSvg>
        {MENUS.map(([before, key, after]) => (
          <MenuItem key={before + key + after}>
            {before}
            <u>{key}</u>
            {after}
          </MenuItem>
        ))}
        <MdiButtons>
          <MdiButton aria-label='Minimize drawing'>
            <Minus color='#716f64' size={10} />
          </MdiButton>
          <MdiButton aria-label='Restore drawing'>
            <Restore size={9} color='#716f64' />
          </MdiButton>
          <MdiButton aria-label='Close drawing'>
            <Cross size={8} color='#716f64' />
          </MdiButton>
        </MdiButtons>
      </MenuBar>

      <ToolRow>
        <Bar>
          <Grip />
          <Tools names='new open save | print preview publish | cut copy paste brush blockEdit | undo' />
          <DropButton aria-label='Undo list' />
          <Tools names='redo' />
          <DropButton aria-label='Redo list' disabled />
          <Tools names='| pan zoom zoomWin zoomPrev | props design toolPal sheetSet markup calc | help' />
        </Bar>
        <Bar>
          <Grip />
          <Tools names='textStyle' />
          <ComboBox label='Text style' value='STANDARD' width={100} />
          <Tools names='| dimStyle' />
          <ComboBox label='Dimension style' value='STANDARD' width={100} />
          <Tools names='| tableStyle' />
          <ComboBox label='Table style' value='Standard' width={100} />
        </Bar>
        <Bar>
          <Grip />
          <Tools names='arcText textFit textMask textArc' />
        </Bar>
      </ToolRow>

      <ToolRow>
        <Bar>
          <Grip />
          <Tools names='layers' />
          <ComboBox label='Layer' value='0' width={299} indent={2}>
            <Icon name='bulbOn' />
            <Icon name='sun' />
            <Icon name='freezeVp' />
            <Icon name='unlock' />
            <Swatch />
          </ComboBox>
          <Tools names='makeLayer layerPrev' />
        </Bar>
        <Bar>
          <Grip />
          <ComboBox label='Color' value='ByLayer' width={149} indent={2}>
            <Swatch />
          </ComboBox>
          <Divider />
          <ComboBox label='Linetype' value='ByLayer' width={159} indent={1}>
            <LineSample $width={60} />
          </ComboBox>
          <Divider />
          <ComboBox label='Lineweight' value='ByLayer' width={124} indent={1}>
            <LineSample $width={34} />
          </ComboBox>
          <Divider />
          <ComboBox label='Plot style' value='ByColor' width={120} indent={5} disabled />
        </Bar>
        <Bar>
          <Grip />
          <Tools names='exp1 exp2 exp3 exp4 exp5 exp6' />
        </Bar>
      </ToolRow>

      <ToolRow>
        <Bar>
          <Grip />
          <Tools names='trackPt from | endpoint midpoint intersection appInt extension | center quadrant tangent | perpendicular parallel insertPt node | nearest snapNone | snapSet' />
        </Bar>
        <Bar>
          <Grip />
          <Tools names='ctb plotter boxText | layFlat layTree layRestore bulb' />
        </Bar>
        <Bar>
          <Grip />
          <Tools names='flagDoc scriptDoc' />
        </Bar>
        <Bar>
          <Grip />
          <Tools names='clipBlock copyNested | imgFrame imgSwap globe breakLine | flash | moveObj' />
        </Bar>
        <Bar>
          <Grip />
          <Tools names='layPen layMatch layMatch2 layYellow layRing layWalk | freeze layOff lock lockOpen' />
        </Bar>
      </ToolRow>

      <WorkArea>
        <SideColumn>
          <SideTools names={DRAW} />
          <SideTools names='gear house' />
        </SideColumn>
        <SideColumn>
          <SideTools names={MODIFY} />
          <SideTools names='orderFront orderBack orderAbove orderUnder' />
        </SideColumn>

        <DrawingPane>
          <CanvasRow>
            <Canvas>
              <Plan />
              <HoverTip>
                {'HATCH\nLayer: 0, Linetype: ByLayer, Color: ByLayer (White)\nLineweight: ByLayer,  Plot Style: ByLayer\nPattern: STEEL  Area: 3397.8710'}
              </HoverTip>
            </Canvas>
            <VScroll>
              <ScrollButton aria-label='Scroll up'>
                <Chevron dir='up' />
              </ScrollButton>
              <ScrollSpace $grow={485} />
              <ScrollButton aria-label='Scroll position'>
                <svg width='7' height='7' viewBox='0 0 7 7' aria-hidden='true'>
                  <path d='M0 .500h7M0 2.500h7M0 4.500h7M0 6.500h7' stroke='#8ba4e0' />
                </svg>
              </ScrollButton>
              <ScrollSpace $grow={93} />
              <ScrollButton aria-label='Scroll down'>
                <Chevron />
              </ScrollButton>
            </VScroll>
          </CanvasRow>
          <TabRow>
            {['M1 0v8M7 0v8L2 4z', 'M6 0v8L1 4z', 'M2 0v8l5-4z', 'M7 0v8M1 0v8l5-4z'].map((d) => (
              <TabNav key={d} aria-label='Scroll tabs'>
                <svg width='8' height='8' viewBox='0 0 8 8' aria-hidden='true'>
                  <path d={d} stroke='#000' strokeWidth='.800' />
                </svg>
              </TabNav>
            ))}
            <TabStrip>
              <SheetTab $active>Model</SheetTab>
              <SheetTab>配置1</SheetTab>
            </TabStrip>
            <HScroll>
              <ScrollButton aria-label='Scroll left'>
                <Chevron dir='left' />
              </ScrollButton>
            </HScroll>
          </TabRow>
        </DrawingPane>
        <Gutter />

        <Palette>
          <PaletteTop>
            <PaletteGrip />
            <PaletteClose aria-label='Close palette'>
              <Cross size={7} />
            </PaletteClose>
          </PaletteTop>
          <PickRow>
            <ComboBox label='Selection' value='No selection' width={80} />
            {['pickAdd', 'selectObj', 'quickSelect'].map((name) => (
              <PickButton key={name} aria-label={name}>
                <Icon name={name} />
              </PickButton>
            ))}
          </PickRow>
          {GROUPS.map((group) => (
            <div key={group.title}>
              <GroupHead>
                {group.title}
                <svg width='9' height='10' viewBox='0 0 9 10' fill='none' stroke='#fff' strokeWidth='1.300' aria-hidden='true'>
                  <path d='M1 5l3.500-3.500L8 5M1 9l3.500-3.500L8 9' />
                </svg>
              </GroupHead>
              <PropTable>
                <tbody>
                  {group.rows.map(([name, value, kind], index) => (
                    <tr key={index}>
                      <PropName scope='row'>{name}</PropName>
                      <PropValue $fixed={kind === 'fixed'}>
                        {kind === 'swatch' && (
                          <ValueLine $gap={6}>
                            <Swatch />
                            {value}
                          </ValueLine>
                        )}
                        {kind === 'line' && (
                          <ValueLine $gap={3}>
                            <LineSample $width={29} />
                            {value}
                          </ValueLine>
                        )}
                        {kind !== 'swatch' && kind !== 'line' && value}
                      </PropValue>
                    </tr>
                  ))}
                </tbody>
              </PropTable>
            </div>
          ))}
          <Blurb />
        </Palette>
      </WorkArea>

      <CommandDock>
        <CommandGrip />
        <CommandWindow>
          <History>{'Analyzing internal islands...\nPick internal point or [Select objects/remove Boundaries]:'}</History>
          <Prompt>
            Command:
            <PromptInput />
          </Prompt>
        </CommandWindow>
      </CommandDock>

      <StatusBar>
        <Coords>480.7919, -6.8427 , 0.0000</Coords>
        {MODES.map(([name, width]) => (
          <ModeButton key={name} $width={width} $on={modes[name]} onClick={() => toggleMode(name)}>
            {name}
          </ModeButton>
        ))}
        <Tray>
          <svg width='16' height='16' viewBox='0 0 16 16' aria-hidden='true'>
            <path d='M1 2h14v12l-3-3H1z' fill='#20e0e8' stroke='#000' />
            <text x='3' y='9' fontSize='8' fontWeight='700' fontFamily='Liberation Sans, sans-serif'>AI</text>
          </svg>
          <svg width='18' height='16' viewBox='0 0 18 16' aria-hidden='true'>
            <path d='M3 1c4 0 7 2 7 6l-3 6H3l2-4-3-4z' fill='#5a7898' stroke='#2c4058' />
            <path d='M11 3l6 12H5z' fill='#ffe020' stroke='#a08010' />
            <path d='M11 7v4M11 12.500v1.500' stroke='#000' strokeWidth='1.500' />
          </svg>
          <svg width='18' height='16' viewBox='0 0 18 16' aria-hidden='true'>
            <path d='M9 8V4c0-4 7-4 7 0v3' fill='none' stroke='#b89410' strokeWidth='2' />
            <path d='M1 8c0-3 10-3 10 0v5c0 3-10 3-10 0z' fill='#e8c41c' stroke='#5a4800' />
            <path d='M2 10h8M2 12h8' stroke='#5a4800' />
          </svg>
          <DropButton aria-label='Tray menu' />
        </Tray>
      </StatusBar>

      {balloonOpen && (
        <Balloon>
          <BalloonHead>
            <svg width='16' height='16' viewBox='0 0 16 16' aria-hidden='true'>
              <path d='M8 1a7 6 0 0 1 3 12l-1 3-3-3A7 6 0 0 1 8 1z' fill='#dbe9fa' stroke='#8fa8c8' />
              <path d='M8 3v2M6.500 6.500H8V11M6 11.500h4' stroke='#1c3fa8' strokeWidth='2' fill='none' />
            </svg>
            <BalloonTitle>Communication Center</BalloonTitle>
            <BalloonClose aria-label='Close' onClick={() => setBalloonOpen(false)}>
              <Cross size={8} />
            </BalloonClose>
          </BalloonHead>
          <BalloonText>The easy way to keep you and your software up-to-date.</BalloonText>
          <BalloonLink href='#updates'>Click here.</BalloonLink>
          <Tail width='42' height='24' viewBox='0 0 42 24' aria-hidden='true'>
            <path d='M3 0L38 22L22 0z' fill='#ffffe1' />
            <path d='M2 1L38 22L22 1' fill='none' stroke='#000' />
          </Tail>
        </Balloon>
      )}
    </Window>
  )
}

export default App
